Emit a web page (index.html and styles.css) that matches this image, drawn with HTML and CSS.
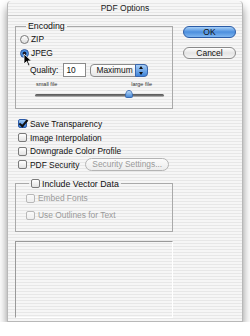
FILE: index.html
```html
<!DOCTYPE html>
<html lang="en">
<head>
  <meta charset="UTF-8" />
  <title>PDF Options</title>
  <link rel="stylesheet" href="styles.css">
</head>
<body>
  <div class="window">
    <div class="titlebar">PDF Options</div>
    <div class="content">
      <div class="main">
        <fieldset class="group encoding">
          <legend>Encoding</legend>
          <label class="option"><span class="radio"></span>ZIP</label>
          <label class="option"><span class="radio on"></span>JPEG</label>
          <div class="quality">
            <span>Quality:</span>
            <span class="field">10</span>
            <span class="popup">Maximum<span class="arrows"></span></span>
          </div>
          <div class="slider-labels">
            <span>small file</span>
            <span>large file</span>
          </div>
          <div class="slider">
            <span class="thumb"></span>
          </div>
        </fieldset>

        <div class="checks">
          <label class="option"><span class="check on"></span>Save Transparency</label>
          <label class="option"><span class="check"></span>Image Interpolation</label>
          <label class="option"><span class="check"></span>Downgrade Color Profile</label>
          <div class="option">
            <span class="check"></span>PDF Security
            <span class="btn-small">Security Settings...</span>
          </div>
        </div>

        <fieldset class="group vector">
          <legend><span class="check"></span>Include Vector Data</legend>
          <label class="option disabled"><span class="check"></span>Embed Fonts</label>
          <label class="option disabled"><span class="check"></span>Use Outlines for Text</label>
        </fieldset>

        <div class="preview"></div>
      </div>

      <div class="side">
        <button class="aqua default">OK</button>
        <button class="aqua">Cancel</button>
      </div>
    </div>

    <svg class="cursor" width="10" height="14" viewBox="0 0 10 14">
      <path d="M1 1 L1 11 L3.5 8.5 L5.5 13 L7 12.3 L5 8 L8.5 8 Z" fill="#000" stroke="#fff" stroke-width="0.8"/>
    </svg>
  </div>
</body>
</html>
```

FILE: styles.css
```css
* {
  box-sizing: border-box;
}

body {
  margin: 0;
  background: #fff;
  font-family: 'Liberation Sans', Arial, sans-serif;
  font-size: 8.4px;
  color: #111;
  white-space: nowrap;
}

.window {
  position: relative;
  margin: 1px 0 0 7px;
  width: 236px;
  height: 321px;
  background: repeating-linear-gradient(to bottom, #f6f6f6 0, #f6f6f6 2px, #e7e7e7 2px, #e7e7e7 3px);
  border: 1px solid #b8b8b8;
  border-top: none;
  border-radius: 4px 4px 0 0;
  box-shadow: 0 6px 10px rgba(0, 0, 0, 0.45);
}

.titlebar {
  height: 15px;
  line-height: 15px;
  text-align: center;
  font-size: 8.5px;
  color: #222;
  border-bottom: 1px solid #c8c8c8;
}

.content {
  display: flex;
  padding: 5px 0 0 7px;
}

.main {
  width: 158px;
}

.group {
  margin: 0;
  border: 1px solid #a9a9a9;
  border-radius: 0;
  min-width: 0;
}

.group legend {
  padding: 0 2px;
  margin-left: 6px;
  font-size: 8.8px;
  display: flex;
  align-items: center;
}

.encoding {
  height: 88px;
  padding: 1px 6px 0 4px;
}

.option {
  display: flex;
  align-items: center;
  height: 14px;
}

.radio {
  width: 9px;
  height: 9px;
  border-radius: 50%;
  border: 1px solid #777;
  background: linear-gradient(#fff, #ddd);
  margin-right: 2px;
  position: relative;
}

.radio.on {
  border-color: #25509a;
  background: radial-gradient(circle at 50% 50%, #1a1a2a 0, #1a1a2a 1.6px, #3b82d8 2.2px, #8fc2f5 5px);
}

.check {
  width: 9px;
  height: 9px;
  border-radius: 2px;
  border: 1px solid #7a7a7a;
  background: linear-gradient(#fff, #e2e2e2);
  margin-right: 3px;
  position: relative;
  flex: none;
}

.check.on {
  border-color: #2c5aa8;
  background: linear-gradient(#9cc8f4, #3b7fd6);
}

.check.on::after {
  content: "";
  position: absolute;
  left: 2px;
  top: -2px;
  width: 3px;
  height: 7px;
  border: solid #111;
  border-width: 0 2px 2px 0;
  transform: rotate(40deg);
}

.quality {
  display: flex;
  align-items: center;
  gap: 4px;
  margin: 3px 0 0 10px;
}

.field {
  width: 23px;
  height: 14px;
  line-height: 12px;
  padding-left: 2px;
  border: 1px solid #8a8a8a;
  background: #fff;
  margin-left: 1px;
}

.popup {
  position: relative;
  width: 58px;
  height: 13px;
  line-height: 11px;
  padding-left: 5px;
  border: 1px solid #8c8c8c;
  border-radius: 4px;
  background: linear-gradient(#fff, #e6e6e6);
}

.arrows {
  position: absolute;
  right: -1px;
  top: -1px;
  width: 13px;
  height: 13px;
  border-radius: 0 4px 4px 0;
  border: 1px solid #3a66ad;
  background: linear-gradient(#a6cdf5, #3f84d9);
}

.arrows::before,
.arrows::after {
  content: "";
  position: absolute;
  left: 3px;
  border: 2px solid transparent;
}

.arrows::before {
  top: -1px;
  border-bottom: 3px solid #111;
}

.arrows::after {
  bottom: -1px;
  border-top: 3px solid #111;
}

.slider-labels {
  display: flex;
  justify-content: space-between;
  margin: 4px 14px 0 16px;
  font-size: 5.5px;
  color: #333;
}

.slider {
  position: relative;
  margin: 7px 2px 0 15px;
  height: 3px;
  border-radius: 2px;
  background: linear-gradient(#555, #777 60%, #ccc);
}

.thumb {
  position: absolute;
  left: 90px;
  top: -4px;
  width: 8px;
  height: 8px;
  background: linear-gradient(#b6d7f7, #4a8bd8);
  border: 1px solid #3b6db4;
  border-radius: 50% 50% 2px 2px / 80% 80% 2px 2px;
}

.checks {
  margin: 8px 0 0 3px;
}

.checks .option {
  height: 13.7px;
}

.btn-small {
  margin-left: 6px;
  height: 13px;
  line-height: 11px;
  padding: 0 6px;
  border: 1px solid #b4b4b4;
  border-radius: 7px;
  background: linear-gradient(#fbfbfb, #ececec);
  color: #999;
}

.vector {
  margin-top: 7px;
  height: 53px;
  padding: 1px 0 0 10px;
}

.vector legend {
  margin-left: 3px;
}

.vector legend .check {
  margin-right: 2px;
}

.disabled {
  color: #9a9a9a;
  height: 17px;
}

.disabled .check {
  border-color: #b8b8b8;
  background: linear-gradient(#fafafa, #eee);
}

.preview {
  margin-top: 9px;
  height: 77px;
  border-top: 1px solid #999;
  border-left: 1px solid #999;
  border-right: 1px solid #fff;
  border-bottom: 1px solid #fff;
}

.side {
  display: flex;
  flex-direction: column;
  gap: 9px;
  margin: 5px 0 0 10px;
}

.aqua {
  width: 53px;
  height: 12px;
  padding: 0;
  font-family: inherit;
  font-size: 8.5px;
  line-height: 10px;
  color: #111;
  border: 1px solid #8a8a8a;
  border-radius: 7px;
  background: linear-gradient(#ffffff, #e4e4e4 50%, #f4f4f4);
}

.aqua.default {
  border-color: #2a5ba6;
  background: linear-gradient(#a8d0f7, #4c8fde 50%, #7fb6ef);
}

.cursor {
  position: absolute;
  left: 15px;
  top: 52px;
}
```
